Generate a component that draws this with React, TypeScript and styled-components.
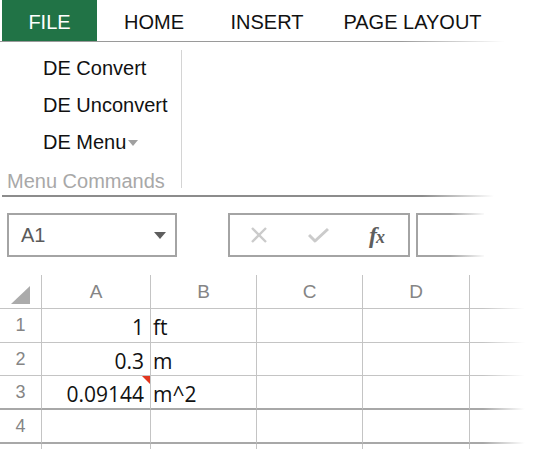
import React from "react";
import styled, { createGlobalStyle } from "styled-components";

const Global = createGlobalStyle`
  html, body { margin: 0; padding: 0; background: #fff; }
  body { font-family: "Liberation Sans", Arial, sans-serif; overflow: hidden; }
`;

const Page = styled.div`
  width: 535px;
  height: 449px;
  overflow: hidden;
  background: #fff;
`;

const TabBar = styled.div`
  display: flex;
  height: 42px;
  box-sizing: border-box;
  padding-left: 2px;
  background-image: linear-gradient(
    to right,
    #9a9a9a 0px,
    #9a9a9a 400px,
    rgba(154, 154, 154, 0) 505px
  );
  background-size: 100% 1px;
  background-position: 0 41px;
  background-repeat: no-repeat;
`;

const Tab = styled.div<{ $w: number; $active?: boolean }>`
  width: ${(p) => p.$w}px;
  height: 41px;
  display: flex;
  align-items: center;
  justify-content: center;
  padding-top: 3px;
  box-sizing: border-box;
  font-size: 20px;
  color: ${(p) => (p.$active ? "#ffffff" : "#111111")};
  background: ${(p) => (p.$active ? "#217346" : "transparent")};
`;

const Ribbon = styled.div`
  display: flex;
  height: 153px;
`;

const Group = styled.div`
  display: flex;
  flex-direction: column;
  width: 181px;
  padding-top: 8px;
  box-sizing: border-box;
`;

const Command = styled.div`
  height: 37px;
  line-height: 37px;
  padding-left: 43px;
  font-size: 20px;
  color: #111;
  display: flex;
  align-items: center;
`;

const Caret = styled.span<{ $color: string; $w: number; $h: number }>`
  display: inline-block;
  width: 0;
  height: 0;
  border-left: ${(p) => p.$w / 2}px solid transparent;
  border-right: ${(p) => p.$w / 2}px solid transparent;
  border-top: ${(p) => p.$h}px solid ${(p) => p.$color};
`;

const CaretWrap = styled.span`
  display: inline-flex;
  margin-left: 2px;
`;

const GroupLabel = styled.div`
  padding-left: 7px;
  padding-top: 7px;
  line-height: 26px;
  font-size: 20px;
  color: #a8a8a8;
  white-space: nowrap;
`;

const Separator = styled.div`
  width: 1px;
  height: 138px;
  margin-top: 8px;
  background: #d4d4d4;
`;

const RibbonRule = styled.div`
  height: 2px;
  margin-left: 2px;
  background: linear-gradient(
    to right,
    #8c8c8c 0px,
    #8c8c8c 420px,
    rgba(140, 140, 140, 0) 492px
  );
`;

const FormulaRow = styled.div`
  display: flex;
  height: 44px;
  margin-top: 16px;
  padding-left: 7px;
`;

const NameBox = styled.div`
  width: 170px;
  box-sizing: border-box;
  border: 2px solid #a4a4a4;
  display: flex;
  align-items: center;
  justify-content: space-between;
  padding: 0 9px 0 12px;
  font-size: 20px;
  color: #5a5a5a;
`;

const FormulaButtons = styled.div`
  width: 182px;
  margin-left: 51px;
  box-sizing: border-box;
  border: 2px solid #a4a4a4;
  display: flex;
  align-items: center;
  padding-left: 20px;
  gap: 40px;
`;

const Fx = styled.span`
  font-family: "Liberation Serif", "Times New Roman", serif;
  font-style: italic;
  color: #5e5e5e;
  font-size: 24px;
  font-weight: bold;
  letter-spacing: -1px;
  & > small {
    font-size: 18px;
  }
`;

const InputBox = styled.div`
  width: 68px;
  margin-left: 6px;
  box-sizing: border-box;
  border-left: 2px solid #a4a4a4;
  background-image: linear-gradient(
      to right,
      #a4a4a4 0px,
      #a4a4a4 32px,
      rgba(164, 164, 164, 0) 68px
    ),
    linear-gradient(
      to right,
      #a4a4a4 0px,
      #a4a4a4 32px,
      rgba(164, 164, 164, 0) 68px
    );
  background-size: 100% 2px, 100% 2px;
  background-position: 0 0, 0 100%;
  background-repeat: no-repeat;
`;

const Grid = styled.div`
  position: relative;
  margin-top: 18px;
  display: grid;
  grid-template-columns: 42px 109px 106px 106px 107px 65px;
  grid-template-rows: 34px 34px 33px 34px 34px 20px;
  &::after {
    content: "";
    position: absolute;
    top: 0;
    bottom: 0;
    right: 0;
    width: 52px;
    background: linear-gradient(
      to right,
      rgba(255, 255, 255, 0) 0%,
      #fff 80%
    );
    pointer-events: none;
  }
`;

const Cell = styled.div<{
  $noBottom?: boolean;
  $last?: boolean;
  $heavy?: boolean;
  $align?: "left" | "right" | "center";
  $kind?: "head" | "row" | "data";
}>`
  position: relative;
  box-sizing: border-box;
  border-right: ${(p) => (p.$last ? "none" : "1px solid #c4c4c4")};
  border-bottom: ${(p) =>
    p.$noBottom ? "none" : p.$heavy ? "2px solid #a8a8a8" : "1px solid #c4c4c4"};
  display: flex;
  align-items: center;
  justify-content: ${(p) =>
    p.$align === "right" ? "flex-end" : p.$align === "center" ? "center" : "flex-start"};
  padding: ${(p) =>
    p.$kind === "data" ? (p.$align === "right" ? "3px 6px 0 0" : "3px 0 0 2px") : "0"};
  font-family: ${(p) =>
    p.$kind === "data" ? `"Open Sans", "Liberation Sans", sans-serif` : `"Liberation Sans", Arial, sans-serif`};
  font-size: ${(p) => (p.$kind === "data" ? "21px" : p.$kind === "row" ? "18px" : "19px")};
  color: ${(p) => (p.$kind === "data" ? "#111" : "#858585")};
  white-space: nowrap;
`;

const CommentMark = styled.span`
  position: absolute;
  top: 0;
  right: 0;
  width: 0;
  height: 0;
  border-top: 8px solid #e2361f;
  border-left: 8px solid transparent;
`;

const CornerIcon = () => (
  <svg width="19" height="18" viewBox="0 0 19 18" style={{ marginTop: 6 }}>
    <polygon points="19,0 19,18 0,18" fill="#ababab" />
  </svg>
);

const XIcon = () => (
  <svg width="18" height="18" viewBox="0 0 18 18">
    <path d="M2 2 L16 16 M16 2 L2 16" stroke="#cbcbcb" strokeWidth="2.4" fill="none" />
  </svg>
);

const CheckIcon = () => (
  <svg width="21" height="18" viewBox="0 0 21 18">
    <path d="M1 9 L7 15 L20 3" stroke="#cbcbcb" strokeWidth="3" fill="none" strokeLinejoin="round" />
  </svg>
);

const cols = ["A", "B", "C", "D"];
const rows: { n: string; a: string; b: string; comment?: boolean; heavy?: boolean }[] = [
  { n: "1", a: "1", b: "ft" },
  { n: "2", a: "0.3", b: "m" },
  { n: "3", a: "0.09144", b: "m^2", comment: true, heavy: true },
  { n: "4", a: "", b: "", heavy: true },
];

export default function App() {
  return (
    <Page>
      <Global />
      <TabBar>
        <Tab $w={95} $active>FILE</Tab>
        <Tab $w={114}>HOME</Tab>
        <Tab $w={112}>INSERT</Tab>
        <Tab $w={179}>PAGE LAYOUT</Tab>
      </TabBar>
      <Ribbon>
        <Group>
          <Command>DE Convert</Command>
          <Command>DE Unconvert</Command>
          <Command>
            DE Menu
            <CaretWrap>
              <Caret $color="#a0a0a0" $w={10} $h={6} />
            </CaretWrap>
          </Command>
          <GroupLabel>Menu Commands</GroupLabel>
        </Group>
        <Separator />
      </Ribbon>
      <RibbonRule />
      <FormulaRow>
        <NameBox>
          <span>A1</span>
          <Caret $color="#5e5e5e" $w={12} $h={7} />
        </NameBox>
        <FormulaButtons>
          <XIcon />
          <CheckIcon />
          <Fx>
            f<small>x</small>
          </Fx>
        </FormulaButtons>
        <InputBox />
      </FormulaRow>
      <Grid>
        <Cell $kind="head" $align="center">
          <CornerIcon />
        </Cell>
        {cols.map((c) => (
          <Cell key={c} $kind="head" $align="center">
            {c}
          </Cell>
        ))}
        <Cell $kind="head" $last />
        {rows.map((r) => (
          <React.Fragment key={r.n}>
            <Cell $kind="row" $align="center" $heavy={r.heavy}>
              {r.n}
            </Cell>
            <Cell $kind="data" $align="right" $heavy={r.heavy}>
              {r.a}
              {r.comment && <CommentMark />}
            </Cell>
            <Cell $kind="data" $align="left" $heavy={r.heavy}>
              {r.b}
            </Cell>
            <Cell $kind="data" $heavy={r.heavy} />
            <Cell $kind="data" $heavy={r.heavy} />
            <Cell $kind="data" $heavy={r.heavy} $last />
          </React.Fragment>
        ))}
        {[0, 1, 2, 3, 4, 5].map((i) => (
          <Cell key={i} $kind="head" $noBottom $last={i === 5} />
        ))}
      </Grid>
    </Page>
  );
}
